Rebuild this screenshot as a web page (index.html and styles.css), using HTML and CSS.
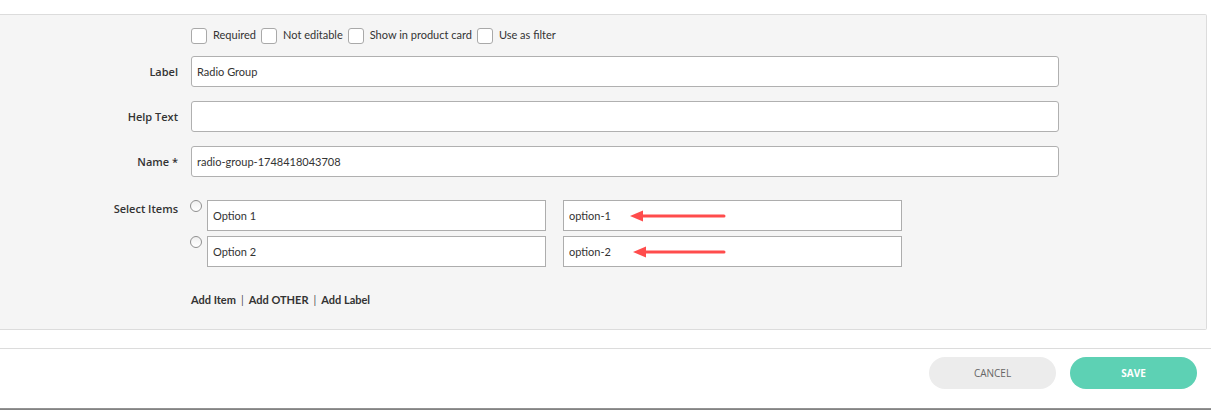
FILE: index.html
```html
<!DOCTYPE html>
<html lang="en">
<head>
  <meta charset="UTF-8" />
  <title>Radio Group Field</title>
  <link rel="stylesheet" href="styles.css">
</head>
<body>
  <div class="page">
    <div class="panel">
      <!-- flags -->
      <div class="row flags">
        <div class="label-col"></div>
        <div class="checks">
          <label class="check"><span class="box"></span>Required</label>
          <label class="check"><span class="box"></span>Not editable</label>
          <label class="check"><span class="box"></span>Show in product card</label>
          <label class="check"><span class="box"></span>Use as filter</label>
        </div>
      </div>

      <div class="row">
        <div class="label-col">Label</div>
        <input class="field" type="text" value="Radio Group">
      </div>
      <div class="row">
        <div class="label-col">Help Text</div>
        <input class="field" type="text" value="">
      </div>
      <div class="row">
        <div class="label-col">Name *</div>
        <input class="field" type="text" value="radio-group-1748418043708">
      </div>

      <!-- options -->
      <div class="row items">
        <div class="label-col">Select Items</div>
        <div class="options">
          <div class="option">
            <span class="radio"></span>
            <input class="opt-input" type="text" value="Option 1">
            <div class="opt-value">
              <input class="opt-input" type="text" value="option-1">
              <svg class="arrow arrow-1" width="96" height="12" viewBox="0 0 96 12">
                <path d="M12 6 H94" stroke="#ff4c4c" stroke-width="3" stroke-linecap="round"/>
                <path d="M0 6 L13 0.5 L13 11.5 Z" fill="#ff4c4c"/>
              </svg>
            </div>
          </div>
          <div class="option">
            <span class="radio"></span>
            <input class="opt-input" type="text" value="Option 2">
            <div class="opt-value">
              <input class="opt-input" type="text" value="option-2">
              <svg class="arrow arrow-2" width="93" height="12" viewBox="0 0 93 12">
                <path d="M12 6 H91" stroke="#ff4c4c" stroke-width="3" stroke-linecap="round"/>
                <path d="M0 6 L13 0.5 L13 11.5 Z" fill="#ff4c4c"/>
              </svg>
            </div>
          </div>
        </div>
      </div>

      <div class="row add-links">
        <div class="label-col"></div>
        <div class="links">
          <a href="#">Add Item</a><span class="sep">|</span><a href="#">Add OTHER</a><span class="sep">|</span><a href="#">Add Label</a>
        </div>
      </div>
    </div>

    <div class="footer">
      <button class="btn btn-cancel">Cancel</button>
      <button class="btn btn-save">Save</button>
    </div>
    <div class="under"></div>
  </div>
</body>
</html>
```

FILE: styles.css
```css
body {
  margin: 0;
  padding: 0;
  background-color: #fff;
  font-family: Lato, 'Open Sans', sans-serif;
  font-size: 11px;
  color: #333;
  overflow: hidden;
}
.page {
  width: 1211px;
  height: 410px;
  padding-top: 14px;
  box-sizing: border-box;
}
.panel {
  width: 1207px;
  box-sizing: border-box;
  background-color: #f5f5f5;
  border: 1px solid #dcdcdc;
  border-left: none;
  border-radius: 0 2px 2px 0;
  padding: 10px 0 22px;
}
.row {
  display: flex;
  align-items: flex-start;
  margin-bottom: 14px;
}
.label-col {
  width: 178px;
  padding: 8px 13px 0 0;
  flex-shrink: 0;
  text-align: right;
  font-family: 'Open Sans', sans-serif;
  font-weight: 600;
  line-height: 15px;
  color: #333;
}
.flags {
  margin-bottom: 11px;
}
.flags .label-col {
  padding-top: 0;
}
.checks {
  display: flex;
  align-items: center;
  height: 20px;
}
.check {
  display: inline-flex;
  align-items: center;
  margin-right: 5px;
  line-height: 14px;
  color: #333;
}
.box {
  width: 16px;
  height: 16px;
  box-sizing: border-box;
  border: 1px solid #a9a9a9;
  border-radius: 3px;
  background-color: #fff;
  margin: 2px 6px 0 0;
}
.field {
  width: 868px;
  height: 31px;
  box-sizing: border-box;
  border: 1px solid #b0b0b0;
  border-radius: 3px;
  padding: 0 5px;
  font-family: inherit;
  font-size: 11px;
  color: #333;
  background-color: #fff;
  outline: none;
}
.items {
  margin-top: 23px;
  margin-bottom: 25px;
}
.items .label-col {
  padding-top: 1px;
}
.options {
  display: flex;
  flex-direction: column;
  gap: 5px;
}
.option {
  display: flex;
  align-items: flex-start;
}
.radio {
  width: 12px;
  height: 12px;
  box-sizing: border-box;
  border: 1px solid #8f8f8f;
  border-radius: 50%;
  background: linear-gradient(#f0f0f0, #fff);
  margin: 0 5px 0 -1px;
}
.opt-input {
  width: 339px;
  height: 31px;
  box-sizing: border-box;
  border: 1px solid #adadad;
  border-radius: 0;
  padding: 0 5px;
  font-family: inherit;
  font-size: 11px;
  color: #333;
  background-color: #fff;
  outline: none;
}
.opt-value {
  position: relative;
  margin-left: 17px;
}
.arrow {
  position: absolute;
  top: 10px;
}
.arrow-1 {
  left: 67px;
}
.arrow-2 {
  left: 70px;
}
.add-links {
  margin-bottom: 0;
}
.links {
  line-height: 15px;
}
.links a {
  color: #333;
  text-decoration: none;
  font-weight: 700;
}
.sep {
  margin: 0 5px;
  color: #555;
}
.footer {
  margin-top: 18px;
  border-top: 1px solid #dcdcdc;
  padding: 8px 14px 0 0;
  height: 51px;
  display: flex;
  justify-content: flex-end;
  align-items: flex-start;
  gap: 14px;
}
.btn {
  width: 127px;
  height: 32px;
  border: none;
  border-radius: 16px;
  font-family: 'Open Sans', sans-serif;
  font-size: 10px;
  text-transform: uppercase;
  cursor: pointer;
}
.btn-cancel {
  background-color: #ececec;
  color: #666;
}
.btn-save {
  background-color: #5dd1b4;
  color: #fff;
  font-weight: 700;
}
.under {
  height: 3px;
  background: linear-gradient(#9a9a9a, #6e6e6e);
}
```
